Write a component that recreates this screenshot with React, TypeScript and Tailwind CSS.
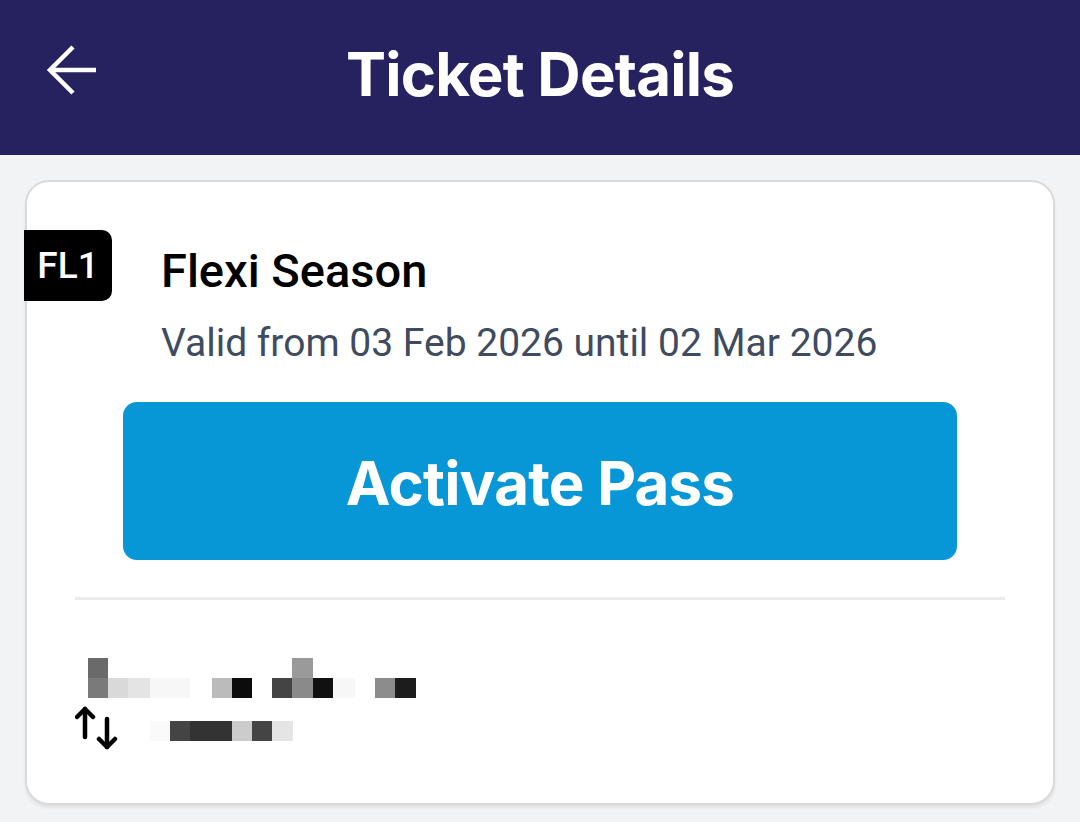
import React from "react";

const ROW_TOP = [
  { w: "w-[20px]", bg: "bg-[#6a6a6a]" },
  { w: "w-[184px]", bg: "bg-transparent" },
  { w: "w-[21px]", bg: "bg-[#9a9a9a]" },
];

const ROW_MID = [
  { w: "w-[20px]", bg: "bg-[#7a7a7a]" },
  { w: "w-[20px]", bg: "bg-[#d9d9d9]" },
  { w: "w-[22px]", bg: "bg-[#e4e4e4]" },
  { w: "w-[20px]", bg: "bg-[#f7f7f7]" },
  { w: "w-[20px]", bg: "bg-[#f7f7f7]" },
  { w: "w-[22px]", bg: "bg-transparent" },
  { w: "w-[20px]", bg: "bg-[#bbbbbb]" },
  { w: "w-[20px]", bg: "bg-[#0c0c0c]" },
  { w: "w-[20px]", bg: "bg-transparent" },
  { w: "w-[20px]", bg: "bg-[#444444]" },
  { w: "w-[21px]", bg: "bg-[#8a8a8a]" },
  { w: "w-[20px]", bg: "bg-[#111111]" },
  { w: "w-[22px]", bg: "bg-[#f7f7f7]" },
  { w: "w-[20px]", bg: "bg-transparent" },
  { w: "w-[20px]", bg: "bg-[#8c8c8c]" },
  { w: "w-[21px]", bg: "bg-[#1c1c1c]" },
];

const ROW_LOW = [
  { w: "w-[20px]", bg: "bg-[#fafafa]" },
  { w: "w-[20px]", bg: "bg-[#444444]" },
  { w: "w-[20px]", bg: "bg-[#333333]" },
  { w: "w-[22px]", bg: "bg-[#333333]" },
  { w: "w-[20px]", bg: "bg-[#cccccc]" },
  { w: "w-[20px]", bg: "bg-[#444444]" },
  { w: "w-[21px]", bg: "bg-[#e5e5e5]" },
];

function Blocks({ cells }: { cells: { w: string; bg: string }[] }) {
  return (
    <div className="flex h-[20px]">
      {cells.map((c, i) => (
        <div key={i} className={`${c.w} h-full ${c.bg}`} />
      ))}
    </div>
  );
}

export default function App() {
  return (
    <div className="w-[1080px] h-[822px] bg-[#f2f3f5] overflow-hidden" style={{ fontFamily: "Roboto, sans-serif" }}>
      {/* Header */}
      <header className="h-[155px] bg-[#26215f] grid grid-cols-[1fr_auto_1fr] items-center">
        <div className="pl-[46px] pb-[15px]">
          <svg width="52" height="50" viewBox="0 0 52 50" fill="none" stroke="white" strokeWidth="4.5">
            <path d="M4 25 H50" />
            <path d="M27 2 L4 25 L27 48" />
          </svg>
        </div>
        <h1 className="text-white font-[Inter,sans-serif] font-bold text-[60px] tracking-[-0.8px] leading-none pb-[8px]">
          Ticket Details
        </h1>
        <div />
      </header>

      {/* Card */}
      <div className="px-[25px] pt-[25px]">
        <div className="bg-white rounded-[24px] border-2 border-[#dadada] shadow-[0_3px_3px_rgba(0,0,0,0.07)] pt-[48px] pb-[55px]">
          <div className="flex">
            <div className="-ml-[3px] w-[88px] h-[71px] bg-black rounded-r-[10px] flex items-center justify-center text-white text-[37px] font-medium">
              FL1
            </div>
            <div className="ml-[49px] mt-[13px]">
              <div className="text-black text-[47px] font-medium leading-[56px]">Flexi Season</div>
              <div className="mt-[20px] text-[#3f4b5f] text-[39px] leading-[48px]">
                Valid from 03 Feb 2026 until 02 Mar 2026
              </div>
            </div>
          </div>

          <div className="px-[96px] mt-[35px]">
            <button className="w-full h-[158px] rounded-[14px] bg-[#0897d6] text-white font-[Inter,sans-serif] font-bold text-[60px] tracking-[-0.8px] leading-none pt-[4px]">
              Activate Pass
            </button>
          </div>

          <div className="mx-[48px] mt-[37px] h-[3px] bg-[#ebebeb]" />

          <div className="pl-[48px] mt-[58px]">
            <div className="pl-[13px]">
              <Blocks cells={ROW_TOP} />
              <Blocks cells={ROW_MID} />
            </div>
            <div className="flex items-center mt-[9px] h-[41px]">
              <svg width="44" height="44" viewBox="0 0 44 44" fill="none" stroke="black" strokeWidth="4.5" strokeLinecap="round" strokeLinejoin="round">
                <path d="M10 3 V31" />
                <path d="M2 11 L10 3 L18 11" />
                <path d="M32 13 V41" />
                <path d="M24 33 L32 41 L40 33" />
              </svg>
              <div className="ml-[31px] mt-[6px]">
                <Blocks cells={ROW_LOW} />
              </div>
            </div>
          </div>
        </div>
      </div>
    </div>
  );
}
